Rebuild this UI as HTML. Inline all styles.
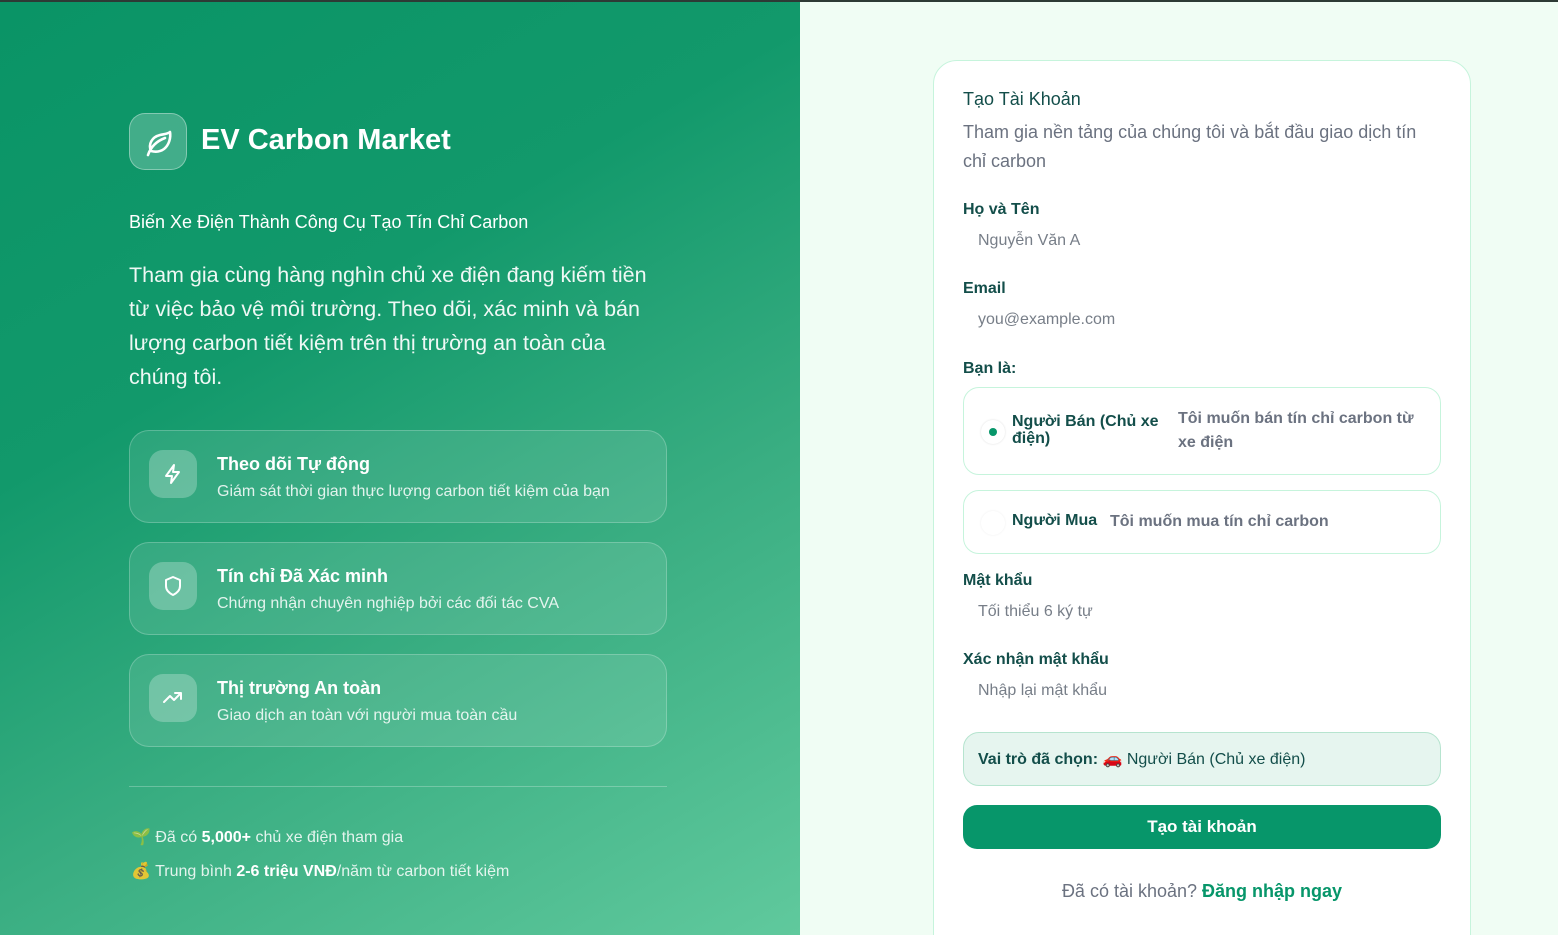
<!DOCTYPE html>
<html><head><meta charset="utf-8"><style>
*{margin:0;padding:0;box-sizing:border-box}
html,body{width:1558px;height:935px;overflow:hidden}
body{font-family:"Liberation Sans","DejaVu Sans",sans-serif;background:#f0fdf4;position:relative}
.topline{position:absolute;left:0;top:0;width:1558px;height:2px;background:#2d3a35;z-index:5}
.left{position:absolute;left:0;top:0;width:800px;height:935px;background:linear-gradient(150deg,#0a9466 0%,#12996b 35%,#3aae82 65%,#60c99d 100%);color:#fff}
.logo{position:absolute;left:129px;top:113px;width:58px;height:57px;border-radius:16px;background:rgba(255,255,255,.22);border:1.5px solid rgba(255,255,255,.35)}
.brand{position:absolute;left:201px;top:124px;font-size:29px;font-weight:bold}
.tag{position:absolute;left:129px;top:212px;font-size:18px}
.desc{position:absolute;left:129px;top:258px;width:540px;font-size:21.5px;line-height:34px;color:rgba(255,255,255,.93)}
.feat{position:absolute;left:129px;width:538px;height:93px;border-radius:20px;background:rgba(255,255,255,.1);border:1px solid rgba(255,255,255,.22)}
.feat .ic{position:absolute;left:19px;top:19px;width:48px;height:48px;border-radius:14px;background:rgba(255,255,255,.25);display:flex;align-items:center;justify-content:center}
.feat .t{position:absolute;left:87px;top:23px;font-size:18px;font-weight:bold}
.feat .s{position:absolute;left:87px;top:52px;font-size:16px;color:rgba(255,255,255,.85)}
.hr{position:absolute;left:129px;top:786px;width:538px;height:1px;background:rgba(255,255,255,.25)}
.st{position:absolute;left:131px;font-size:16px;color:rgba(255,255,255,.85)}
.st b{color:#fff}
.card{position:absolute;left:933px;top:60px;width:538px;height:900px;background:#fff;border:1.5px solid #c6f4dc;border-radius:24px}
.c{position:absolute;left:963px}
h2{font-size:18px;font-weight:normal;color:#134e4a}
.lab{font-size:16px;font-weight:bold;color:#134e4a}
.ph{font-size:16px;color:#777e88;left:978px}
.opt{position:absolute;left:963px;width:478px;border:1.5px solid #c6f4dc;border-radius:16px;background:#fff}
.sel{position:absolute;left:963px;top:732px;width:478px;height:54px;border:1.5px solid #b6e4cf;border-radius:16px;background:#e6f5ef;font-size:16px;color:#134e4a;padding:16px 14px}
.btn{position:absolute;left:963px;top:805px;width:478px;height:44px;border-radius:14px;background:#07966a;color:#fff;font-size:17px;font-weight:bold;text-align:center;line-height:44px}
.wrap{position:absolute;left:0;top:0;width:1558px;height:935px;overflow:hidden}
</style></head><body><div class="wrap">
<div class="topline"></div>
<div class="left">
<div class="logo"><svg width="58" height="57" viewBox="0 0 58 57"><path d="M18 41c3-9 9-14 17-17M21 37c-3-7 1-14 9-16 4-1 8-1 10-3 1 6-1 13-6 17-4 3-9 3-13 2z" fill="none" stroke="#fff" stroke-width="2.6" stroke-linecap="round" stroke-linejoin="round"/></svg></div>
<div class="brand">EV Carbon Market</div>
<div class="tag">Biến Xe Điện Thành Công Cụ Tạo Tín Chỉ Carbon</div>
<div class="desc">Tham gia cùng hàng nghìn chủ xe điện đang kiếm tiền từ việc bảo vệ môi trường. Theo dõi, xác minh và bán lượng carbon tiết kiệm trên thị trường an toàn của chúng tôi.</div>
<div class="feat" style="top:430px"><div class="ic"><svg width="24" height="24" viewBox="0 0 24 24"><path d="M13 3L5 14h6l-1 7 8-11h-6l1-7z" fill="none" stroke="#fff" stroke-width="2" stroke-linejoin="round"/></svg></div><div class="t">Theo dõi Tự động</div><div class="s">Giám sát thời gian thực lượng carbon tiết kiệm của bạn</div></div>
<div class="feat" style="top:542px"><div class="ic"><svg width="24" height="24" viewBox="0 0 24 24"><path d="M12 3l7 3v6c0 4-3 7-7 9-4-2-7-5-7-9V6z" fill="none" stroke="#fff" stroke-width="2" stroke-linejoin="round"/></svg></div><div class="t">Tín chỉ Đã Xác minh</div><div class="s">Chứng nhận chuyên nghiệp bởi các đối tác CVA</div></div>
<div class="feat" style="top:654px"><div class="ic"><svg width="24" height="24" viewBox="0 0 24 24"><path d="M3 16l6-6 4 4 7-7M14 7h6v6" fill="none" stroke="#fff" stroke-width="2" stroke-linecap="round" stroke-linejoin="round"/></svg></div><div class="t">Thị trường An toàn</div><div class="s">Giao dịch an toàn với người mua toàn cầu</div></div>
<div class="hr"></div>
<div class="st" style="top:827px">🌱 Đã có <b>5,000+</b> chủ xe điện tham gia</div>
<div class="st" style="top:861px">💰 Trung bình <b>2-6 triệu VNĐ</b>/năm từ carbon tiết kiệm</div>
</div>
<div class="card"></div>
<h2 class="c" style="top:89px">Tạo Tài Khoản</h2>
<div class="c" style="top:118px;width:455px;font-size:18px;line-height:29px;color:#6b7280">Tham gia nền tảng của chúng tôi và bắt đầu giao dịch tín chỉ carbon</div>
<div class="c lab" style="top:201px">Họ và Tên</div>
<div class="c ph" style="top:232px">Nguyễn Văn A</div>
<div class="c lab" style="top:280px">Email</div>
<div class="c ph" style="top:311px">you@example.com</div>
<div class="c lab" style="top:360px">Bạn là:</div>
<div class="opt" style="top:387px;height:88px">
<div style="position:absolute;left:17px;top:32px;width:24px;height:24px;border-radius:50%;background:#fff;box-shadow:0 0 2px #ddd"><div style="position:absolute;left:8px;top:8px;width:8px;height:8px;border-radius:50%;background:#07966a"></div></div>
<div style="position:absolute;left:48px;top:25px;width:160px;font-size:16px;font-weight:bold;color:#134e4a;line-height:17px">Người Bán (Chủ xe điện)</div>
<div style="position:absolute;left:214px;top:19px;width:250px;font-size:16px;font-weight:bold;color:#6b7280;line-height:24px">Tôi muốn bán tín chỉ carbon từ xe điện</div></div>
<div class="opt" style="top:490px;height:64px">
<div style="position:absolute;left:17px;top:20px;width:24px;height:24px;border-radius:50%;background:#fff;box-shadow:0 0 2px #eee"></div>
<div style="position:absolute;left:48px;top:21px;font-size:16px;font-weight:bold;color:#134e4a">Người Mua</div>
<div style="position:absolute;left:146px;top:22px;font-size:16px;font-weight:bold;color:#6b7280">Tôi muốn mua tín chỉ carbon</div></div>
<div class="c lab" style="top:572px">Mật khẩu</div>
<div class="c ph" style="top:603px">Tối thiểu 6 ký tự</div>
<div class="c lab" style="top:651px">Xác nhận mật khẩu</div>
<div class="c ph" style="top:682px">Nhập lại mật khẩu</div>
<div class="sel"><b>Vai trò đã chọn:</b> 🚗 Người Bán (Chủ xe điện)</div>
<div class="btn">Tạo tài khoản</div>
<div style="position:absolute;left:963px;width:478px;top:881px;text-align:center;font-size:18px;color:#6b7280">Đã có tài khoản? <span style="color:#07966a;font-weight:bold">Đăng nhập ngay</span></div>
</div></body></html>
